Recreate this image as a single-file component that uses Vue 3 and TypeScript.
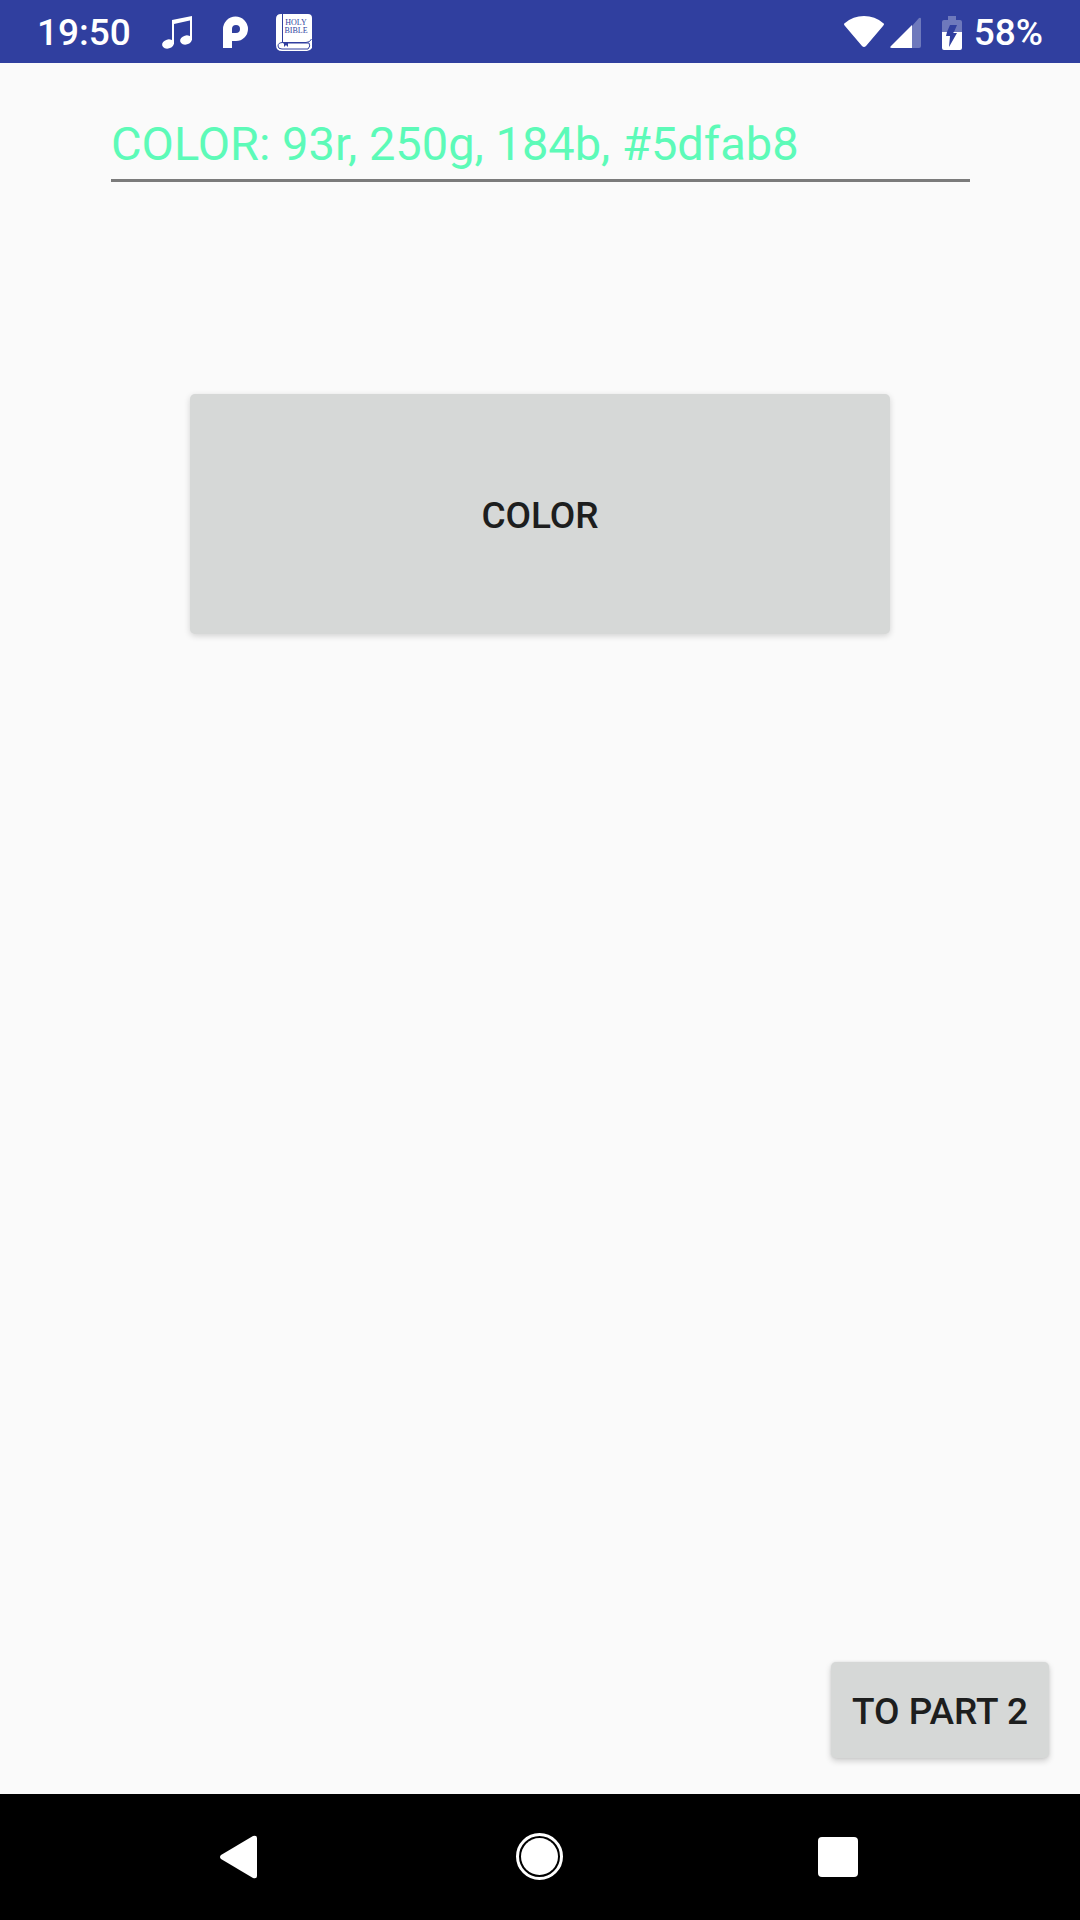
<script setup lang="ts">
import { computed, ref } from 'vue'

interface Rgb {
  r: number
  g: number
  b: number
}

const color = ref<Rgb>({ r: 93, g: 250, b: 184 })
const label = ref('COLOR: 93r, 250g, 184b, #5dfab8')
const textColor = computed(() => `rgb(${color.value.r}, ${color.value.g}, ${color.value.b})`)

function randomize(): void {
  const next = (): number => Math.floor(Math.random() * 256)
  const { r, g, b } = (color.value = { r: next(), g: next(), b: next() })
  const hex = [r, g, b].map((n) => n.toString(16).padStart(2, '0')).join('')
  label.value = `COLOR: ${r}r, ${g}g, ${b}b, #${hex}`
}
</script>

<template>
  <div class="screen">
    <header class="status">
      <div class="group">
        <span class="status-text">19:50</span>
        <svg class="music" width="32" height="34" viewBox="0 0 32 34" aria-hidden="true">
          <path d="M11 4 L31 0 V4 L13 8 V28 H11 Z" fill="#fff" />
          <path d="M29 2 H31 V24 H29 Z" fill="#fff" />
          <ellipse cx="7" cy="28" rx="6" ry="4.5" transform="rotate(-15 7 28)" fill="#fff" />
          <ellipse cx="25" cy="24" rx="6" ry="4.5" transform="rotate(-15 25 24)" fill="#fff" />
        </svg>
        <svg class="pay" width="26" height="34" viewBox="0 0 26 34" aria-hidden="true">
          <path
            fill="#fff"
            fill-rule="evenodd"
            d="M0 13 A12.5 12.5 0 0 1 25 13 A12 12 0 0 1 13 25 H9 V32 H0 Z M9 17 H13 A4 4 0 1 0 9 13 Z"
          />
        </svg>
        <svg class="book" width="36" height="37" viewBox="0 0 36 37" aria-hidden="true">
          <path fill="#fff" d="M5 0 H32 Q36 0 36 4 V34 Q34 37 31 37 H6 Q0 37 0 31 V5 Q0 0 5 0 Z" />
          <path
            fill="none"
            stroke="#303f9f"
            d="M6.5 0 V28 M2 32 Q2 28.5 7 28.5 H30 Q34 28.5 35.5 25 M7 29 H33 Q35 32 32 35 H6 Q2 35 2 32"
          />
          <path fill="#303f9f" d="M8 29 H12 V33 L10 31 L8 33 Z" />
          <text class="book-title" x="20" y="11" text-anchor="middle">HOLY</text>
          <text class="book-title" x="20" y="19" text-anchor="middle">BIBLE</text>
        </svg>
      </div>
      <div class="group">
        <svg width="40" height="34" viewBox="0 0 40 34" aria-hidden="true">
          <path
            fill="#fff"
            d="M1 7 Q9 0 20 0 T39 7 Q41 8 39 10 L22 30 Q20 32 18 30 L1 10 Q-1 8 1 7 Z"
          />
        </svg>
        <svg class="signal" width="32" height="34" viewBox="0 0 32 34" aria-hidden="true">
          <path fill="#fff" opacity="0.3" d="M22 10 L29 2 Q31 1 31 3 V30 Q31 32 29 32 H22 Z" />
          <path fill="#fff" d="M22 9 V32 H2 Q-1 32 1 30 Z" />
        </svg>
        <svg class="battery" width="20" height="34" viewBox="0 0 20 34" aria-hidden="true">
          <path
            fill="#fff"
            opacity="0.3"
            fill-rule="evenodd"
            d="M6 0 H14 V4 H18 Q20 4 20 6 V16 H0 V6 Q0 4 2 4 H6 Z M8 9 L5 16 H12 L15 9 Z"
          />
          <path
            fill="#fff"
            fill-rule="evenodd"
            d="M0 16 H20 V32 Q20 34 18 34 H2 Q0 34 0 32 Z M5 16 L4 20 H8 L7 31 L15 17 H11 L12 16 Z"
          />
        </svg>
        <span class="status-text">58%</span>
      </div>
    </header>

    <main class="content">
      <input
        v-model="label"
        class="field"
        type="text"
        aria-label="Color value"
        :style="{ color: textColor }"
      />
      <button class="btn color-btn" type="button" @click="randomize">COLOR</button>
      <button class="btn next-btn" type="button">TO PART 2</button>
    </main>

    <nav class="nav">
      <button type="button" aria-label="Back">
        <svg width="48" height="48" viewBox="0 0 48 48">
          <path fill="#fff" d="M5 22 L37 3 Q41 2 41 5 V43 Q41 46 37 45 L5 26 Q3 24 5 22 Z" />
        </svg>
      </button>
      <button type="button" aria-label="Home">
        <svg width="48" height="48" viewBox="0 0 48 48">
          <circle cx="23.5" cy="23.5" r="22" fill="none" stroke="#fff" stroke-width="3" />
          <circle cx="23.5" cy="23.5" r="18.5" fill="#fff" />
        </svg>
      </button>
      <button type="button" aria-label="Recent apps">
        <svg width="48" height="48" viewBox="0 0 48 48">
          <rect x="2" y="4" width="40" height="40" rx="4" fill="#fff" />
        </svg>
      </button>
    </nav>
  </div>
</template>

<style>
body {
  margin: 0;
}
</style>

<style scoped>
.screen {
  display: flex;
  flex-direction: column;
  min-height: 100vh;
  background: #fafafa;
  font-family: Roboto, 'Liberation Sans', sans-serif;
}

.status {
  display: flex;
  justify-content: space-between;
  box-sizing: border-box;
  height: 63px;
  padding: 2px 37px 0;
  background: #303f9f;
  color: #fff;
}

.group {
  display: flex;
  align-items: center;
}

.status-text {
  font-size: 37px;
  font-weight: 500;
  line-height: 64px;
}

.music {
  margin-left: 30px;
}

.pay {
  margin-left: 30px;
}

.book {
  margin-left: 27px;
}

.book-title {
  fill: #303f9f;
  font-family: 'Liberation Serif', serif;
  font-size: 8px;
}

.signal {
  margin-left: 6px;
}

.battery {
  margin: 0 12px 0 20px;
}

.content {
  display: flex;
  flex: 1;
  flex-direction: column;
  padding: 48px 31px 36px;
}

.field {
  box-sizing: border-box;
  height: 71px;
  margin: 0 79px 0 80px;
  padding: 0 0 3px;
  border: 0;
  border-bottom: 3px solid #7b7b7b;
  outline: 0;
  background: transparent;
  font-family: inherit;
  font-size: 47px;
}

.btn {
  padding: 2px 21px 0;
  border: 0;
  border-radius: 5px;
  background: #d6d8d7;
  box-shadow: 0 3px 6px rgba(0, 0, 0, 0.18), 0 0 3px rgba(0, 0, 0, 0.08);
  color: #1d1e1e;
  font-family: inherit;
  font-size: 37px;
  font-weight: 500;
}

.color-btn {
  height: 240px;
  margin: 212px 159px 0;
  box-shadow: 0 2px 6px rgba(0, 0, 0, 0.16);
}

.next-btn {
  align-self: flex-end;
  height: 96px;
  margin-top: auto;
}

.nav {
  display: grid;
  grid-template-columns: repeat(3, 1fr);
  height: 126px;
  padding: 0 90px;
  background: #000;
}

.nav button {
  display: flex;
  align-items: center;
  justify-content: center;
  padding: 0;
  border: 0;
  background: transparent;
}
</style>
